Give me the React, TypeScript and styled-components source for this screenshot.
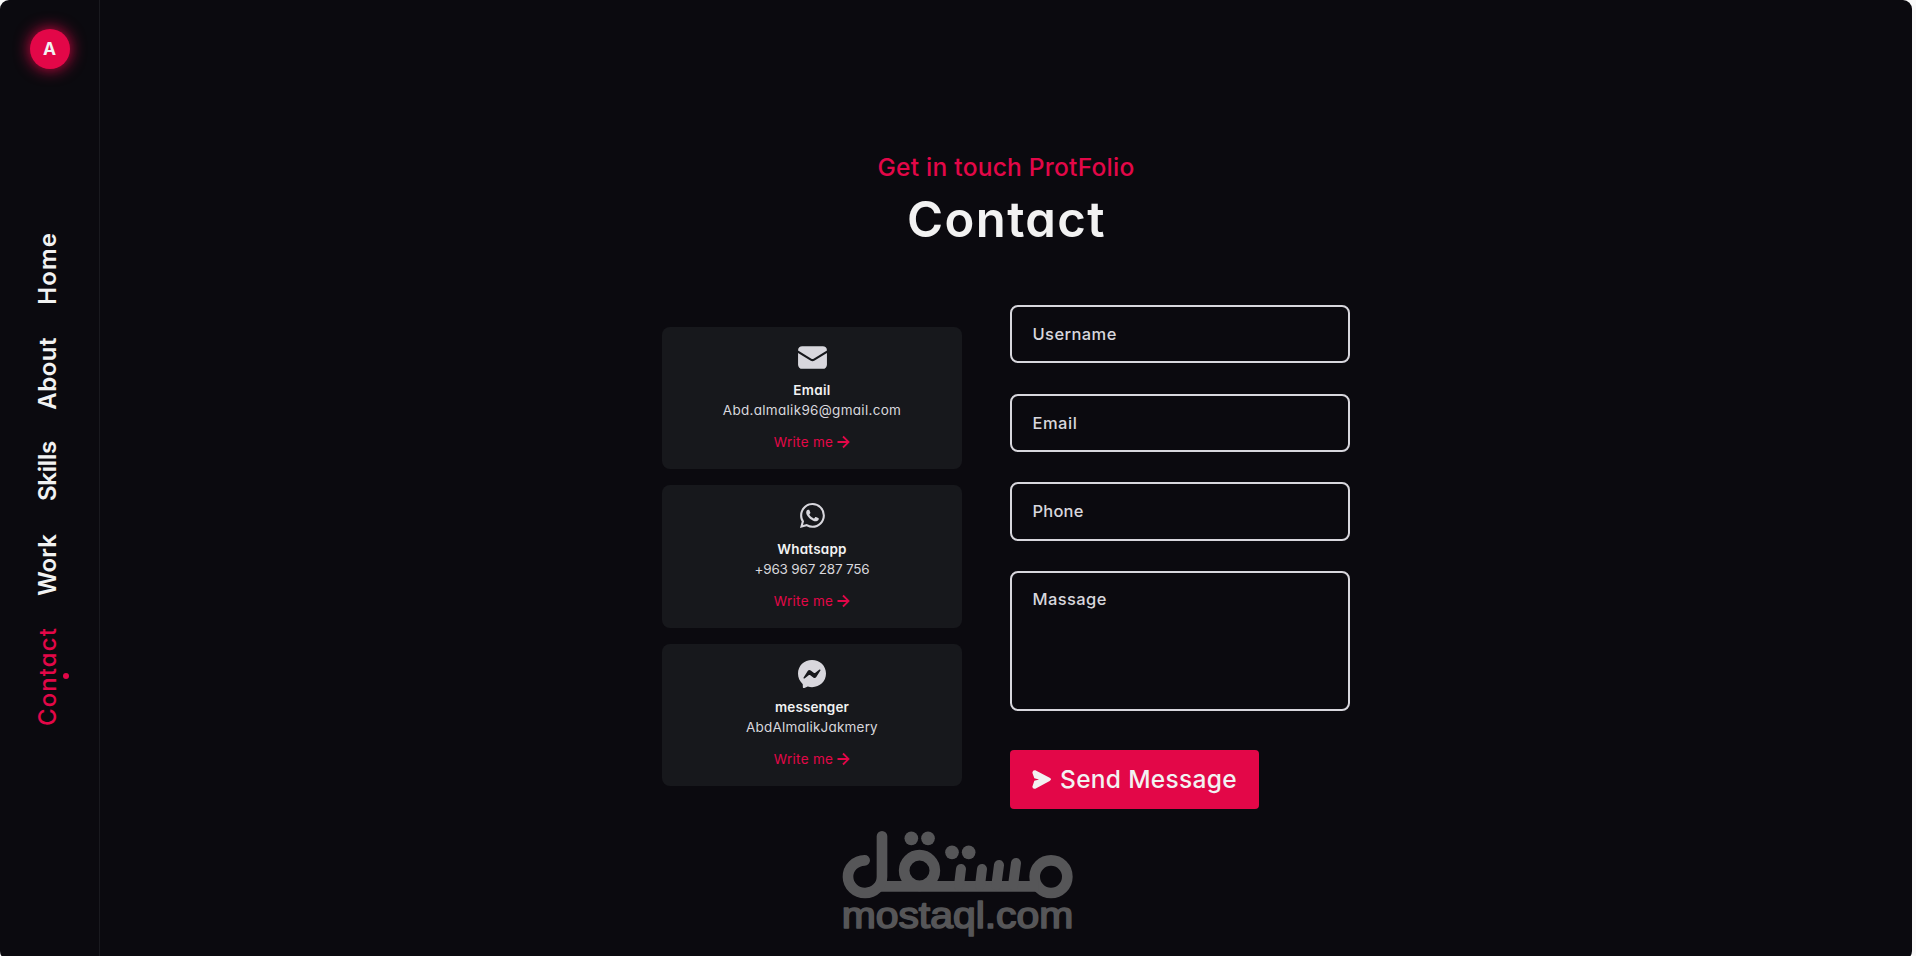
import React from "react";
import styled, { createGlobalStyle } from "styled-components";
import { BiRightArrowAlt } from "react-icons/bi";
import { BsMessenger, BsWhatsapp } from "react-icons/bs";
import { HiEnvelope } from "react-icons/hi2";

const navItems = [
  { label: "Home", spacing: 1.1 },
  { label: "About", spacing: 0.5 },
  { label: "Skills", spacing: -0.2 },
  { label: "Work", spacing: 0.1 },
  { label: "Contact", spacing: 1.1, active: true },
];

const cards = [
  {
    icon: <HiEnvelope size={33} />,
    title: "Email",
    titleSpacing: 0.3,
    data: "Abd.almalik96@gmail.com",
    dataSpacing: 0.3,
  },
  {
    icon: <BsWhatsapp size={25} />,
    title: "Whatsapp",
    titleSpacing: 0.2,
    data: "+963 967 287 756",
    dataSpacing: -0.2,
  },
  {
    icon: <BsMessenger size={28} />,
    title: "messenger",
    titleSpacing: 0.1,
    data: "AbdAlmalikJakmery",
    dataSpacing: 0.2,
  },
];

const fields = [
  { name: "Username", type: "text", spacing: 0.4 },
  { name: "Email", type: "email", spacing: 0.5 },
  { name: "Phone", type: "text", spacing: 0.2 },
];

const SendIcon = () => (
  <svg width="19" height="19" viewBox="0 0 57 57" fill="currentColor">
    <path d="M10 1 53 23q8 5 0 10L10 56q-8 2-9-6l6-18 14-3.500L7 25 1 8q1-8 9-7Z" />
  </svg>
);

const Mostaql = () => (
  <Watermark viewBox="0 0 840 438">
    <g fill="none" stroke="#565658" strokeWidth="32" strokeLinecap="round">
      <circle cx="693" cy="200" r="49" />
      <circle cx="298.500" cy="181.500" r="46" />
      <path d="M180 229H655" strokeLinecap="butt" />
      <path d="M186 79V200A51 49 0 1 1 134 151" />
      <path d="M423 177 417 226M486 177 480 226M537 165 529 226M588 159 579 226" strokeWidth="30" />
    </g>
    <g fill="#565658">
      <circle cx="274" cy="85" r="20.500" />
      <circle cx="324" cy="85" r="20.500" />
      <circle cx="396" cy="127" r="20.500" />
      <circle cx="446" cy="127" r="20.500" />
      <text x="65" y="354" textLength="695" lengthAdjust="spacingAndGlyphs">
        mostaql.com
      </text>
    </g>
  </Watermark>
);

const App = () => {
  return (
    <Page>
      <GlobalStyle />
      <Panel>
        <Sidebar>
          <Logo>A</Logo>
          <Nav>
            {navItems.map(({ label, spacing, active }) => (
              <NavLink key={label} href="#" $spacing={spacing} $active={active}>
                {label}
              </NavLink>
            ))}
          </Nav>
        </Sidebar>
        <Content>
          <Subtitle>Get in touch ProtFolio</Subtitle>
          <Title>Contact</Title>
          <Columns>
            <CardList>
              {cards.map((card) => (
                <Card key={card.title}>
                  <CardIcon>{card.icon}</CardIcon>
                  <CardTitle $spacing={card.titleSpacing}>{card.title}</CardTitle>
                  <CardData $spacing={card.dataSpacing}>{card.data}</CardData>
                  <CardLink href="#">
                    Write me <BiRightArrowAlt size={22} />
                  </CardLink>
                </Card>
              ))}
            </CardList>
            <Form>
              {fields.map(({ name, type, spacing }) => (
                <Input key={name} type={type} placeholder={name} $spacing={spacing} />
              ))}
              <TextArea placeholder="Massage" $spacing={0.4} />
              <SendButton type="button">
                <SendIcon />
                Send Message
              </SendButton>
            </Form>
          </Columns>
        </Content>
      </Panel>
      <Mostaql />
    </Page>
  );
};

const GlobalStyle = createGlobalStyle`
  * {
    box-sizing: border-box;
    margin: 0;
    padding: 0;
    /* single-storey "a" */
    font-feature-settings: "cv11";
  }
  body {
    background: #fafafa;
    font-family: Inter, "Liberation Sans", sans-serif;
    color: #f2f2f2;
  }
  a {
    text-decoration: none;
  }
`;

const Page = styled.div`
  position: relative;
  height: 956px;
  overflow: hidden;
`;

const Panel = styled.div`
  display: grid;
  grid-template-columns: 100px 1fr;
  width: 1912px;
  height: 960px;
  background: #0b0a0f;
  border-radius: 9px;
`;

const Sidebar = styled.aside`
  display: flex;
  flex-direction: column;
  align-items: center;
  padding-top: 29px;
  border-right: 1px solid #1a1a1f;
`;

const Logo = styled.a`
  display: grid;
  place-items: center;
  width: 40px;
  height: 40px;
  margin-left: 1px;
  padding: 0 1px 1px 0;
  border-radius: 50%;
  background: #e30748;
  box-shadow: 0 0 16px #e30748;
  font-size: 17.5px;
  font-weight: 700;
`;

const Nav = styled.nav`
  display: flex;
  flex-direction: column;
  gap: 32px;
  margin-top: 163px;
  margin-right: 3px;
`;

const NavLink = styled.a<{ $spacing: number; $active?: boolean }>`
  position: relative;
  writing-mode: vertical-rl;
  transform: rotate(180deg);
  font-size: 24px;
  line-height: 30px;
  font-weight: ${({ $active }) => ($active ? 500 : 600)};
  letter-spacing: ${({ $spacing }) => $spacing}px;
  color: ${({ $active }) => ($active ? "#e30748" : "#f2f2f2")};
  &:after {
    content: "";
    display: ${({ $active }) => ($active ? "block" : "none")};
    position: absolute;
    top: calc(50% - 3px);
    left: -6px;
    width: 6px;
    height: 6px;
    border-radius: 50%;
    background: #e30748;
  }
`;

const Content = styled.main`
  display: flex;
  flex-direction: column;
  align-items: center;
  padding-top: 149px;
`;

const Subtitle = styled.span`
  font-size: 24.5px;
  font-weight: 500;
  line-height: 36px;
  letter-spacing: 0.25px;
  color: #e30748;
`;

const Title = styled.h2`
  font-size: 49px;
  font-weight: 600;
  line-height: 72px;
  letter-spacing: 1.4px;
  text-indent: 1px;
  margin-top: -1px;
  margin-bottom: 49px;
`;

const Columns = styled.div`
  display: grid;
  grid-template-columns: 300px 340px;
  column-gap: 48px;
`;

const CardList = styled.div`
  display: flex;
  flex-direction: column;
  gap: 16px;
  padding-top: 22px;
`;

const Card = styled.div`
  display: flex;
  flex-direction: column;
  align-items: center;
  height: 142.4px;
  padding-top: 14px;
  border-radius: 8px;
  background: #17181c;
  font-size: 13.5px;
  line-height: 20px;
`;

const CardIcon = styled.div`
  display: grid;
  place-items: center;
  height: 32px;
  margin-bottom: 7.4px;
  color: #d8d7dd;
`;

const CardTitle = styled.h3<{ $spacing: number }>`
  font-size: 13.5px;
  font-weight: 600;
  letter-spacing: ${({ $spacing }) => $spacing}px;
`;

const CardData = styled.span<{ $spacing: number }>`
  margin-bottom: 11px;
  letter-spacing: ${({ $spacing }) => $spacing}px;
  color: #d8d7dd;
`;

const CardLink = styled.a`
  display: flex;
  align-items: center;
  letter-spacing: 0.3px;
  margin-left: 4px;
  color: #e30748;
  & svg {
    margin-left: -1px;
  }
`;

const Form = styled.form`
  display: flex;
  flex-direction: column;
  align-items: flex-start;
`;

const Input = styled.input<{ $spacing: number }>`
  width: 100%;
  height: 58.4px;
  margin-bottom: 30.2px;
  padding: 0 20.5px;
  border: 2px solid #d8d7dd;
  border-radius: 8px;
  background: none;
  font: 500 16.5px Inter, "Liberation Sans", sans-serif;
  letter-spacing: ${({ $spacing }) => $spacing}px;
  &::placeholder {
    color: #d8d7dd;
  }
`;

const TextArea = styled(Input).attrs({ as: "textarea" })`
  height: 140px;
  margin-bottom: 39px;
  padding: 14px 20.5px;
  line-height: 24px;
  resize: none;
`;

const SendButton = styled.button`
  display: flex;
  align-items: center;
  gap: 9px;
  width: 249px;
  height: 59px;
  padding-left: 22px;
  border: none;
  border-radius: 4px;
  background: #e30748;
  color: #f2f2f2;
  font: 500 24.5px Inter, "Liberation Sans", sans-serif;
  letter-spacing: 0.3px;
  white-space: nowrap;
`;

const Watermark = styled.svg`
  position: absolute;
  left: 820px;
  top: 810px;
  width: 280px;
  height: 146px;
  & text {
    font-family: "Liberation Sans", sans-serif;
    font-size: 110px;
    stroke: #565658;
    stroke-width: 5px;
    stroke-linejoin: round;
  }
`;

export default App;
